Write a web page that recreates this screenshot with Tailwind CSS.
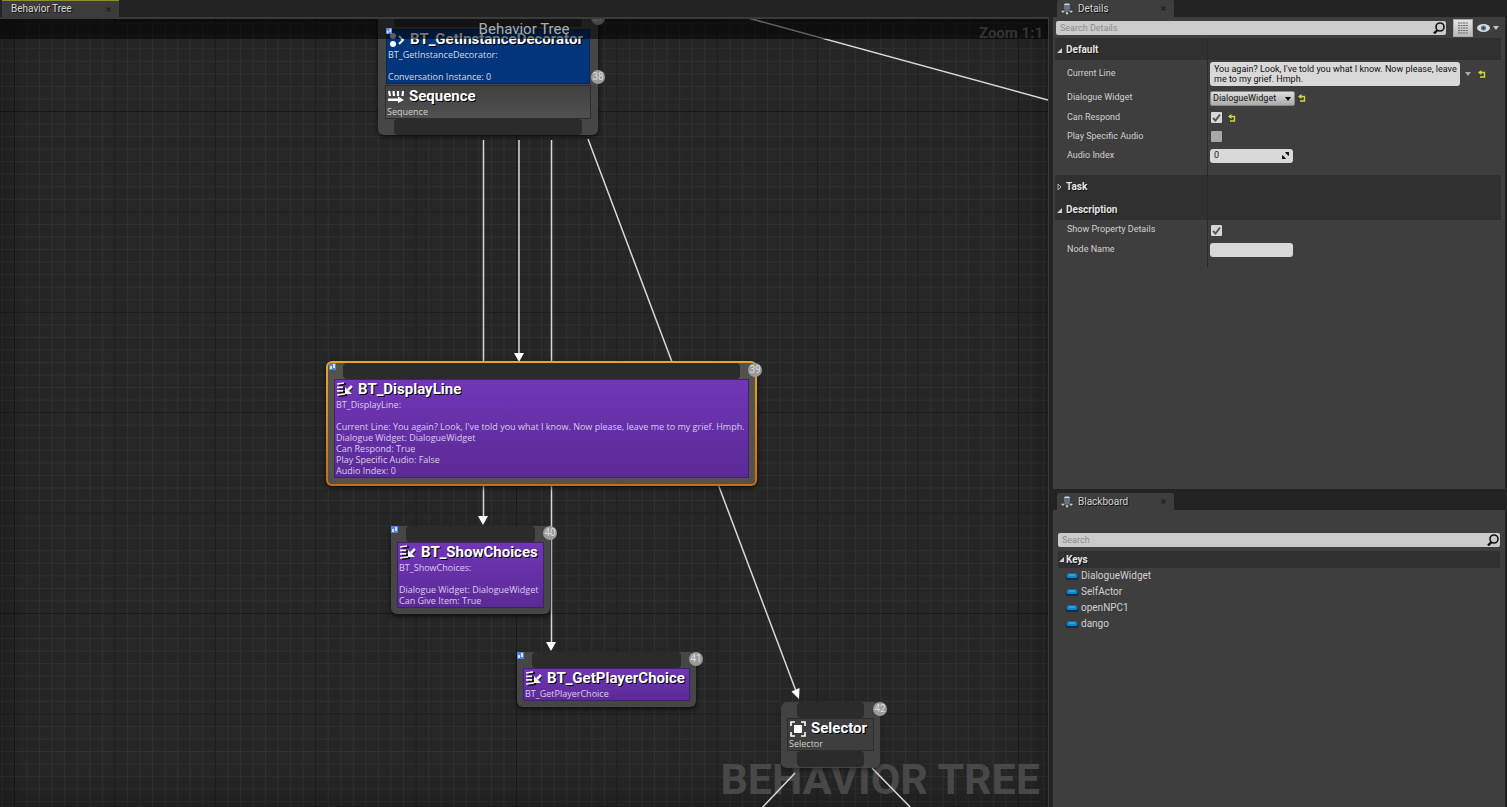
<!DOCTYPE html>
<html lang="en">
<head>
<meta charset="utf-8">
<title>Behavior Tree</title>
<script src="https://cdn.jsdelivr.net/npm/@tailwindcss/browser@4"></script>
</head>
<body class="h-screen overflow-hidden bg-[#232323] font-['Roboto','Open_Sans',sans-serif] text-[#d0d0d0]">
<svg class="hidden" aria-hidden="true">
  <defs>
    <symbol id="task" viewBox="0 0 16 15">
      <g fill="none" stroke="#111" stroke-width="2" transform="translate(1 1)"><path d="M1 2 8 1M1 5.500h6M1 9h6M1 13l8-1M15 4l-4 4"/></g>
      <g fill="none" stroke="#f4f4f4" stroke-width="1.700"><path d="M0 2 7 1M0 5.300h6M0 8.800h6M0 13l8-1"/><path d="M15 4l-4 4" stroke-width="2.600"/></g>
      <path d="M8 5v7h7z" fill="#f4f4f4"/>
    </symbol>
    <symbol id="seq" viewBox="0 0 16 13">
      <path d="M1 1l1 5M5.500 1l.5 5M10 1v5M15 1l-.5 5" stroke="#fff" stroke-width="2.200"/>
      <path d="M0 8.500h10V6.500l6 3.500-6 3v-2H0z" fill="#fff"/>
    </symbol>
    <symbol id="sel" viewBox="0 0 16 16">
      <path d="M1 5V1h4M11 1h4v4M15 11v4h-4M5 15H1v-4" fill="none" stroke="#fff" stroke-width="1.600"/>
      <path d="M4 4h8v8H4z" fill="#fff"/>
    </symbol>
    <symbol id="deco" viewBox="0 0 16 16">
      <circle cx="4" cy="4" r="3" fill="#ccd"/><circle cx="4" cy="12" r="3" fill="#fff"/>
      <path d="M10 4l4 4-4 4" fill="none" stroke="#fff" stroke-width="2"/>
    </symbol>
    <symbol id="flag" viewBox="0 0 7 7"><path d="M0 0h7v7H0z" fill="#5583dc"/><path d="M1 3h2v3H1zM4 1h2v4H4z" fill="#d4e2ff"/></symbol>
    <symbol id="reset" viewBox="0 0 8 8"><path d="M1 2.500h5.500v4.500H2" fill="none" stroke="#d3d83a" stroke-width="1.400"/><path d="M0 2.500 3.500 0v5z" fill="#d3d83a"/></symbol>
    <symbol id="find" viewBox="0 0 12 12"><circle cx="7" cy="5" r="4" fill="none" stroke="#111" stroke-width="1.600"/><path d="M4.500 8 1 11.500" stroke="#111" stroke-width="2.400"/></symbol>
    <symbol id="gizmo" viewBox="0 0 12 12"><path d="M3 1.500h6v5H3z" fill="#66748a"/><path d="M4 .5h4l1 1.500H3z" fill="#cfd8e4"/><path d="M6 6v4M5 7.500 1 9M7 7.500l4 1.500" stroke="#8d949c" stroke-width="1"/><path d="M4.500 9.500h3L6 12zM0 8l2.500-.5v2.500zM12 8l-2.500-.5v2.500z" fill="#d8d8d8"/></symbol>
    <symbol id="open" viewBox="0 0 6 6"><path d="M6 0v6H0z" fill="#d0d0d0"/></symbol>
    <symbol id="shut" viewBox="0 0 5 8"><path d="M1 1l3 3-3 3z" fill="none" stroke="#b0b0b0"/></symbol>
    <symbol id="pill" viewBox="0 0 12 7"><rect y="1" width="12" height="6" rx="2" fill="#082c40"/><rect x=".5" y=".5" width="11" height="4.500" rx="2" fill="#0b86cc"/><path d="M3 2h6" stroke="#53bdf2"/></symbol>
    <symbol id="x" viewBox="0 0 5 5"><path d="M.5.5l4 4M4.500.5l-4 4" stroke="#222" stroke-width="1.200"/></symbol>
    <symbol id="down" viewBox="0 0 6 4"><path d="M0 0h6L3 4z" fill="currentColor"/></symbol>
  </defs>
</svg>
<div class="flex h-full pr-[2px]">
  <main class="flex min-w-0 flex-1 flex-col">
    <div class="flex h-[17px] shrink-0 pl-[2px]">
      <button class="flex w-[117px] items-center justify-between border-t border-[#8f8c2a] bg-[#3c3c3c] pr-2 pl-[9px] text-[10px] leading-4 text-[#d8d8d8] [text-shadow:1px_1px_0_#111]">Behavior Tree<svg class="size-[5px]"><use href="#x"/></svg></button>
    </div>
    <section class="relative min-h-0 flex-1 overflow-hidden border-t-2 border-r border-[#3a3a3a] bg-[#262626]">
      <svg class="absolute inset-0 h-full w-full" aria-hidden="true">
        <defs>
          <pattern id="minor" width="12.550" height="12.550" patternUnits="userSpaceOnUse" x="14" y="92"><path d="M.5 0v12.550M0 .5h12.550" stroke="#313131"/></pattern>
          <pattern id="major" width="100.400" height="100.400" patternUnits="userSpaceOnUse" x="14" y="92"><path d="M.5 0v100.400M0 .5h100.400" stroke="#191919"/></pattern>
        </defs>
        <rect width="100%" height="100%" fill="url(#minor)"/>
        <rect width="100%" height="100%" fill="url(#major)"/>
      </svg>
      <div class="absolute inset-0 shadow-[inset_0_0_40px_#0006]"></div>
      <div class="absolute right-2 bottom-0 text-[43px] leading-[56px] font-bold whitespace-nowrap text-[#484848]">BEHAVIOR TREE</div>

      <article class="absolute top-[-20px] left-[378px] w-[220px] rounded-md bg-[#464646] px-[7px] pt-[30px] shadow-[0_2px_5px_#000a]">
        <div class="absolute inset-x-4 top-3 h-4 rounded bg-[#2b2b2b]"></div>
        <span class="absolute top-3 right-[-7px] grid size-[14px] place-items-center rounded-full bg-[#9a9a9a] text-[10px] leading-[14px] text-[#ddd]">37</span>
        <span class="absolute top-[71px] right-[-7px] grid size-[14px] place-items-center rounded-full bg-[#9a9a9a] text-[10px] leading-[14px] text-[#ddd]">38</span>
        <svg class="absolute top-[29px] left-2 z-10 size-[6px]"><use href="#flag"/></svg>
        <div class="mx-[1px] h-[55px] border border-[#0a2550] bg-[#02357c] px-[1px] text-[#d5dbe6]">
          <h2 class="flex items-center gap-[5px] pl-[1px] text-[15px] leading-[19px] font-bold text-white [text-shadow:1px_1px_0_#000]"><svg class="size-4 shrink-0"><use href="#deco"/></svg>BT_GetInstanceDecorator</h2>
          <p class="font-['Open_Sans','Roboto',sans-serif] text-[9px] leading-[11px] whitespace-nowrap">BT_GetInstanceDecorator:<br><br>Conversation Instance: 0</p>
        </div>
        <div class="mt-[1px] h-[34px] border border-[#2c2c2c] bg-linear-to-b from-[#404040] to-[#505050] px-[1px]">
          <h2 class="flex items-center gap-[5px] pl-[1px] text-[15px] leading-5 font-bold text-white [text-shadow:1px_1px_0_#000]"><svg class="h-[13px] w-4"><use href="#seq"/></svg>Sequence</h2>
          <p class="font-['Open_Sans','Roboto',sans-serif] text-[9px] leading-[11px]">Sequence</p>
        </div>
        <div class="mx-[9px] h-4 rounded bg-[#2b2b2b]"></div>
      </article>

      <svg class="absolute inset-0 h-full w-full" aria-hidden="true">
        <g fill="none" stroke="#d8d8d8" stroke-width="1.500">
          <path d="M483.500 121v380M519 121v215M551.500 121v506M588 120l208 552M748-1l300 82M795 754l-36 38M872 749l42 43"/>
        </g>
        <path d="M478 497h10l-5 9zM514 334h10l-5 9zM546 623h10l-5 9zM791.500 672.500l8-3.500-.5 11z" fill="#fff"/>
      </svg>

      <article class="absolute top-[342px] left-[326px] w-[431px] rounded-md bg-linear-to-b from-[#e6a820] to-[#cf6a0c] p-[2px] shadow-[0_2px_5px_#000a]">
        <div class="rounded bg-[#55524c] px-[6px] pb-[6px]">
          <div class="mx-[9px] h-4 rounded bg-[#2b2b2b]"></div>
          <div class="border border-[#402070] bg-linear-to-b from-[#7136b8] to-[#5a2a95] px-[1px] pb-[1px] text-[#d9cdea]">
            <h2 class="flex items-center gap-[5px] pl-[1px] text-[15px] leading-[19px] font-bold text-white [text-shadow:1px_1px_0_#000]"><svg class="h-[15px] w-4"><use href="#task"/></svg>BT_DisplayLine</h2>
            <p class="font-['Open_Sans','Roboto',sans-serif] text-[9px] leading-[11px] whitespace-nowrap">BT_DisplayLine:<br><br>Current Line: You again? Look, I've told you what I know. Now please, leave me to my grief. Hmph.<br>Dialogue Widget: DialogueWidget<br>Can Respond: True<br>Play Specific Audio: False<br>Audio Index: 0</p>
          </div>
        </div>
        <svg class="absolute top-[2px] left-[3px] size-[7px]"><use href="#flag"/></svg>
        <span class="absolute top-[2px] right-[-5px] grid size-[14px] place-items-center rounded-full bg-[#9a9a9a] text-[10px] leading-[14px] text-[#ddd]">39</span>
      </article>

      <article class="absolute top-[507px] left-[391px] w-[159px] rounded-md bg-[#464646] px-[6px] pb-[6px] shadow-[0_2px_5px_#000a]">
        <div class="mx-[9px] h-4 rounded bg-[#2b2b2b]"></div>
        <div class="border border-[#402070] bg-linear-to-b from-[#7136b8] to-[#5a2a95] px-[1px] pb-[1px] text-[#d9cdea]">
          <h2 class="flex items-center gap-[5px] pl-[1px] text-[15px] leading-[19px] font-bold text-white [text-shadow:1px_1px_0_#000]"><svg class="h-[15px] w-4 shrink-0"><use href="#task"/></svg>BT_ShowChoices</h2>
          <p class="font-['Open_Sans','Roboto',sans-serif] text-[9px] leading-[11px] whitespace-nowrap">BT_ShowChoices:<br><br>Dialogue Widget: DialogueWidget<br>Can Give Item: True</p>
        </div>
        <svg class="absolute top-0 left-0 size-[7px]"><use href="#flag"/></svg>
        <span class="absolute top-0 right-[-7px] grid size-[14px] place-items-center rounded-full bg-[#9a9a9a] text-[10px] leading-[14px] text-[#ddd]">40</span>
      </article>

      <article class="absolute top-[633px] left-[517px] w-[179px] rounded-md bg-[#464646] px-[6px] pb-[6px] shadow-[0_2px_5px_#000a]">
        <div class="mx-[9px] h-4 rounded bg-[#2b2b2b]"></div>
        <div class="border border-[#402070] bg-linear-to-b from-[#7136b8] to-[#5a2a95] px-[1px] pb-[1px] text-[#d9cdea]">
          <h2 class="flex items-center gap-[5px] pl-[1px] text-[15px] leading-[19px] font-bold text-white [text-shadow:1px_1px_0_#000]"><svg class="h-[15px] w-4 shrink-0"><use href="#task"/></svg>BT_GetPlayerChoice</h2>
          <p class="font-['Open_Sans','Roboto',sans-serif] text-[9px] leading-[11px]">BT_GetPlayerChoice</p>
        </div>
        <svg class="absolute top-0 left-0 size-[7px]"><use href="#flag"/></svg>
        <span class="absolute top-0 right-[-7px] grid size-[14px] place-items-center rounded-full bg-[#9a9a9a] text-[10px] leading-[14px] text-[#ddd]">41</span>
      </article>

      <article class="absolute top-[683px] left-[781px] w-[99px] rounded-md bg-[#464646]/90 px-[6px] pb-[1px] shadow-[0_2px_5px_#0006]">
        <div class="mx-[10px] h-4 rounded bg-[#2b2b2b]"></div>
        <div class="border border-[#2c2c2c] bg-[#3e3e3e] px-[1px] pb-[1px]">
          <h2 class="flex items-center gap-[5px] pl-[1px] text-[15px] leading-[19px] font-bold text-white [text-shadow:1px_1px_0_#000]"><svg class="size-4"><use href="#sel"/></svg>Selector</h2>
          <p class="font-['Open_Sans','Roboto',sans-serif] text-[9px] leading-[11px]">Selector</p>
        </div>
        <div class="mx-[10px] h-4 rounded bg-[#2b2b2b]"></div>
        <span class="absolute top-0 right-[-7px] grid size-[14px] place-items-center rounded-full bg-[#9a9a9a] text-[10px] leading-[14px] text-[#ddd]">42</span>
      </article>

      <header class="absolute inset-x-0 top-0 h-5 bg-black/55 text-center text-[15px] leading-5 text-[#adadad]">Behavior Tree</header>
      <div class="absolute top-1 right-[5px] text-[15px] leading-5 font-bold text-[#333]">Zoom 1:1</div>
    </section>
  </main>

  <aside class="ml-1 flex w-[452px] shrink-0 flex-col">
    <div class="flex h-[17px] shrink-0 pl-1">
      <button class="flex w-[117px] items-center rounded-t-xs bg-[#3e3e3e] pr-2 pl-1 text-[10px] leading-4 text-[#d0d0d0] [text-shadow:1px_1px_0_#111]"><svg class="mr-[5px] size-3"><use href="#gizmo"/></svg>Details<svg class="ml-auto size-[5px]"><use href="#x"/></svg></button>
    </div>
    <section class="flex h-[472px] shrink-0 flex-col bg-[#3e3e3e] pr-1 pl-[2px]">
      <div class="flex h-[21px] items-center pt-[1px] pr-[2px] pl-[1px]">
        <label class="flex h-[14px] flex-1 items-center rounded-xs bg-[#cbcbcb] pr-[1px] pl-1"><input aria-label="Search Details" placeholder="Search Details" class="h-[14px] min-w-0 flex-1 text-[9px] text-black outline-none placeholder:text-[#8b8b8b]"><svg class="size-3"><use href="#find"/></svg></label>
        <button aria-label="Property matrix" class="ml-[7px] grid h-[18px] w-5 place-items-center border border-[#aaa] bg-linear-to-b from-[#e4e4e4] to-[#bbb]"><svg class="h-3 w-[10px]" viewBox="0 0 10 12"><path d="M0 1h10M0 3.500h10M0 6h10M0 8.500h10M0 11h10" stroke="#666" stroke-dasharray="2 .6"/></svg></button>
        <button aria-label="View options" class="ml-1 flex items-center gap-[3px] text-[#c8c8c8]"><svg class="h-2 w-[13px]" viewBox="0 0 13 8"><ellipse cx="6.500" cy="4" rx="6.500" ry="4" fill="#d8dade"/><circle cx="6.500" cy="4" r="2.600" fill="#667894"/><circle cx="6.500" cy="4" r="1" fill="#1a2230"/></svg><svg class="h-1 w-[6px]"><use href="#down"/></svg></button>
      </div>
      <div class="relative pb-[10px]">
        <div class="pointer-events-none absolute inset-y-0 left-[152px] w-px bg-[#2a2a2a]"></div>
        <h3 class="flex h-[22px] items-center gap-1 bg-[#303030] pl-[2px] text-[10px] font-bold text-[#e4e4e4] [text-shadow:1px_1px_0_#111]"><svg class="mt-[2px] size-[5px]"><use href="#open"/></svg>Default</h3>
        <div class="flex h-[28px] items-center"><label for="line" class="w-[155px] pl-3 text-[9px]">Current Line</label><textarea id="line" class="h-[24px] w-[250px] resize-none overflow-hidden rounded-[3px] bg-[#d8d8d8] py-[2px] pl-1 text-[9px] leading-[10px] text-[#111]">You again? Look, I've told you what I know. Now please, leave me to my grief. Hmph.</textarea><svg class="ml-[5px] h-1 w-[6px] text-[#aaa]"><use href="#down"/></svg><button aria-label="Reset Current Line" class="ml-[7px]"><svg class="size-2"><use href="#reset"/></svg></button></div>
        <div class="flex h-5 items-center"><label for="widget" class="w-[155px] pl-3 text-[9px]">Dialogue Widget</label><span class="relative"><select id="widget" class="block h-[15px] w-[85px] appearance-none rounded-xs border border-[#888] bg-linear-to-b from-[#ddd] to-[#aaa] pl-[2px] text-[9px] leading-[13px] text-[#111]"><option>DialogueWidget</option></select><svg class="pointer-events-none absolute top-[6px] right-[4px] h-1 w-[6px] text-black"><use href="#down"/></svg></span><button aria-label="Reset Dialogue Widget" class="ml-[3px]"><svg class="size-2"><use href="#reset"/></svg></button></div>
        <div class="flex h-[19px] items-center"><label for="respond" class="w-[155px] pl-3 text-[9px]">Can Respond</label><span class="relative size-[13px] pl-[1px]"><input id="respond" type="checkbox" checked class="mt-[1px] block size-[11px] appearance-none rounded-[1px] bg-[#d8d8d8]"><svg class="pointer-events-none absolute top-[2px] left-[2px] size-[9px]" viewBox="0 0 9 9"><path d="M1 5l2.500 2.500L8 1.500" fill="none" stroke="#555" stroke-width="2"/></svg></span><button aria-label="Reset Can Respond" class="ml-[5px]"><svg class="size-2"><use href="#reset"/></svg></button></div>
        <div class="flex h-[19px] items-center"><label for="audio" class="w-[156px] pl-3 text-[9px]">Play Specific Audio</label><input id="audio" type="checkbox" class="size-[11px] appearance-none rounded-[1px] bg-[#a8a8a8]"></div>
        <div class="flex h-[19px] items-center"><label for="index" class="w-[155px] pl-3 text-[9px]">Audio Index</label><span class="flex h-[14px] w-[83px] items-center rounded-[3px] bg-[#d8d8d8] px-1"><input id="index" value="0" class="min-w-0 flex-1 text-[9px] text-[#222] outline-none"><svg class="size-[7px]" viewBox="0 0 7 7"><path d="M3 0h4v4L5.500 3 4.500 2zM0 3v4h4L3 5.500 2 4.500z" fill="#111"/></svg></span></div>
      </div>
      <div class="relative">
        <div class="pointer-events-none absolute inset-y-0 left-[152px] w-px bg-[#2a2a2a]"></div>
        <h3 class="flex h-[23px] items-center gap-1 bg-[#303030] pl-[2px] text-[10px] font-bold text-[#e4e4e4] [text-shadow:1px_1px_0_#111]"><svg class="h-2 w-[5px]"><use href="#shut"/></svg>Task</h3>
        <h3 class="flex h-[22px] items-center gap-1 bg-[#303030] pl-[2px] text-[10px] font-bold text-[#e4e4e4] [text-shadow:1px_1px_0_#111]"><svg class="mt-[2px] size-[5px]"><use href="#open"/></svg>Description</h3>
        <div class="flex h-5 items-center"><label for="show" class="w-[155px] pl-3 text-[9px]">Show Property Details</label><span class="relative size-[13px] pl-[1px]"><input id="show" type="checkbox" checked class="mt-[1px] block size-[11px] appearance-none rounded-[1px] bg-[#d8d8d8]"><svg class="pointer-events-none absolute top-[2px] left-[2px] size-[9px]" viewBox="0 0 9 9"><path d="M1 5l2.500 2.500L8 1.500" fill="none" stroke="#555" stroke-width="2"/></svg></span></div>
        <div class="mb-2 flex h-[19px] items-center"><label for="node" class="w-[155px] pl-3 text-[9px]">Node Name</label><input id="node" class="h-[14px] w-[83px] rounded-[3px] bg-[#d8d8d8] px-1 text-[9px] text-black"></div>
      </div>
    </section>
    <div class="mt-1 flex h-[17px] shrink-0 pl-1">
      <button class="flex w-[117px] items-center rounded-t-xs bg-[#3e3e3e] pr-2 pl-1 text-[10px] leading-4 text-[#d0d0d0] [text-shadow:1px_1px_0_#111]"><svg class="mr-[5px] size-3"><use href="#gizmo"/></svg>Blackboard<svg class="ml-auto size-[5px]"><use href="#x"/></svg></button>
    </div>
    <section class="min-h-0 flex-1 bg-[#3e3e3e] pt-[23px] pr-[5px] pl-[5px]">
      <label class="flex h-[14px] items-center rounded-xs bg-[#cbcbcb] pr-[1px] pl-1"><input aria-label="Search" placeholder="Search" class="h-[14px] min-w-0 flex-1 text-[9px] text-black outline-none placeholder:text-[#8b8b8b]"><svg class="size-3"><use href="#find"/></svg></label>
      <h3 class="mt-1 flex h-[17px] items-center gap-[2px] bg-[#303030] pl-[1px] text-[10px] font-bold text-[#e4e4e4] [text-shadow:1px_1px_0_#111]"><svg class="size-[5px]"><use href="#open"/></svg>Keys</h3>
      <ul class="pl-2 text-[10px] leading-4">
        <li class="flex items-center gap-[3px]"><svg class="h-[7px] w-3"><use href="#pill"/></svg>DialogueWidget</li>
        <li class="flex items-center gap-[3px]"><svg class="h-[7px] w-3"><use href="#pill"/></svg>SelfActor</li>
        <li class="flex items-center gap-[3px]"><svg class="h-[7px] w-3"><use href="#pill"/></svg>openNPC1</li>
        <li class="flex items-center gap-[3px]"><svg class="h-[7px] w-3"><use href="#pill"/></svg>dango</li>
      </ul>
    </section>
  </aside>
</div>
</body>
</html>
